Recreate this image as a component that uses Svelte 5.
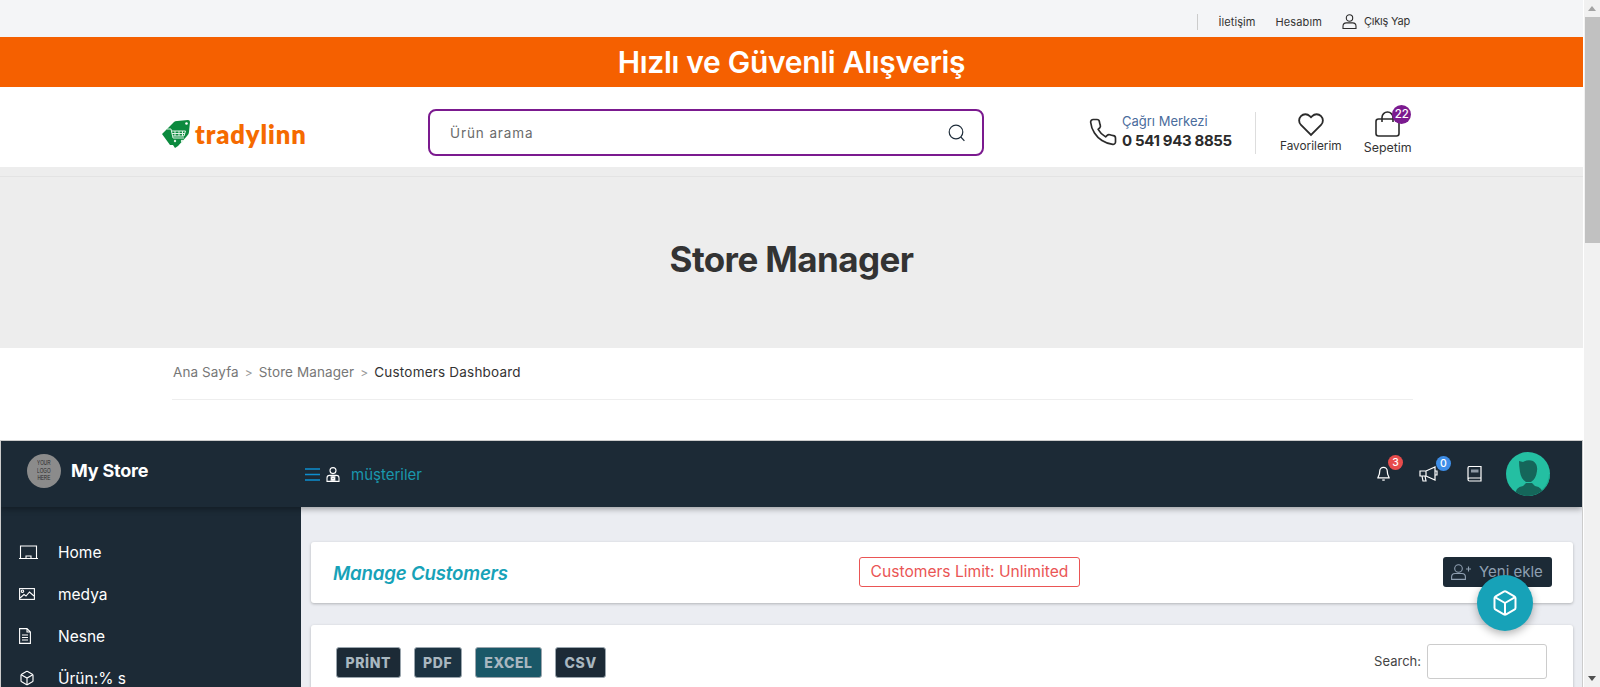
<script>
  const menu = [
    { label: 'Home', icon: 'home' },
    { label: 'medya', icon: 'media' },
    { label: 'Nesne', icon: 'doc' },
    { label: 'Ürün:% s', icon: 'cube' }
  ];
  const exportsList = [
    { label: 'PRİNT', cls: '' },
    { label: 'PDF', cls: 'pdf' },
    { label: 'EXCEL', cls: 'excel' },
    { label: 'CSV', cls: '' }
  ];
</script>

<div class="window">
  <div class="page">
    <div class="topbar">
      <span class="sep"></span>
      <a class="first">İletişim</a>
      <a>Hesabım</a>
      <a class="logout">
        <svg width="15" height="15" viewBox="0 0 15 15" fill="none" stroke="#2b2b2b" stroke-width="1.1"><circle cx="7.5" cy="4" r="3.2"/><path d="M1 14.5v-2.2c0-2 1.6-3.4 3.4-3.4h6.2c1.8 0 3.4 1.4 3.4 3.4v2.2z"/></svg>
        <span class="out">Çıkış Yap</span>
      </a>
    </div>

    <div class="promo">Hızlı ve Güvenli Alışveriş</div>

    <header class="head">
      <div class="logo">
        <svg width="30" height="30" viewBox="0 0 30 30">
          <path d="M1 15 L13 3 Q14 2 16 2 L27 1 Q29 1 29 3 L28 13 Q28 15 26 17 L17 27 L14 29 L12 26 L9 26 Z" fill="#0b8a3e"/>
          <circle cx="25.5" cy="4.5" r="1.3" fill="#fff"/>
          <path d="M6 10 h4 l2 9 h11 M10.5 12 h14 l-1.5 5 h-11 M14 12 v5 M18 12 v5 M21.5 12 v5 M11 14.5 h13" fill="none" stroke="#dff3e5" stroke-width="1"/>
          <circle cx="14" cy="22" r="1.2" fill="#dff3e5"/><circle cx="21" cy="22" r="1.2" fill="#dff3e5"/>
        </svg>
        <span>tradylinn</span>
      </div>

      <div class="search">
        <span>Ürün arama</span>
        <svg width="18" height="18" viewBox="0 0 18 18" fill="none" stroke="#1f2d3a" stroke-width="1.2"><circle cx="8" cy="8" r="6.8"/><path d="M12.8 13l3.6 3.8"/></svg>
      </div>

      <div class="call">
        <svg width="30" height="32" viewBox="0 0 24 24" fill="none" stroke="#2b2b2b" stroke-width="1.35" stroke-linejoin="round"><path d="M22 16.92v3a2 2 0 0 1-2.18 2 19.79 19.79 0 0 1-8.63-3.07 19.5 19.5 0 0 1-6-6 19.79 19.79 0 0 1-3.07-8.67A2 2 0 0 1 4.11 2h3a2 2 0 0 1 2 1.72 12.84 12.84 0 0 0 .7 2.81 2 2 0 0 1-.45 2.11L8.09 9.91a16 16 0 0 0 6 6l1.27-1.27a2 2 0 0 1 2.11-.45 12.84 12.84 0 0 0 2.81.7A2 2 0 0 1 22 16.92z"/></svg>
        <div class="call-text">
          <span class="call-label">Çağrı Merkezi</span>
          <strong>0 541 943 8855</strong>
        </div>
      </div>

      <span class="vline"></span>

      <div class="tool fav">
        <svg width="28" height="25" viewBox="0 0 24 22" fill="none" stroke="#2b2b2b" stroke-width="1.6"><path d="M20.84 3.61a5.5 5.5 0 0 0-7.78 0L12 4.67l-1.06-1.06a5.5 5.5 0 0 0-7.78 7.78L12 20.23l8.84-8.84a5.5 5.5 0 0 0 0-7.78z"/></svg>
        <span>Favorilerim</span>
      </div>

      <div class="tool cart">
        <span class="bag">
          <svg width="25" height="26" viewBox="0 0 25 26" fill="none" stroke="#2b2b2b" stroke-width="1.6"><rect x="1" y="8" width="23" height="17" rx="2.5"/><path d="M7 11V6.5a5.5 5.5 0 0 1 11 0V11"/></svg>
          <b class="count">22</b>
        </span>
        <span>Sepetim</span>
      </div>
    </header>

    <section class="hero"><h1>Store Manager</h1></section>

    <nav class="crumbs">
      <span>Ana Sayfa</span><i>&gt;</i><span>Store Manager</span><i>&gt;</i><span class="now">Customers Dashboard</span>
    </nav>

    <div class="dash">
      <div class="dash-top">
        <div class="brand">
          <span class="mark"><span>YOUR<br />LOGO<br />HERE</span></span>
          <strong>My Store</strong>
        </div>
        <div class="dash-title">
          <svg width="15" height="13" viewBox="0 0 15 13" stroke="#0d8ed0" stroke-width="1.4"><path d="M0 1h15M0 6.5h15M0 12h15"/></svg>
          <svg class="person" width="14" height="15" viewBox="0 0 14 15" fill="none" stroke="#fff" stroke-width="1.1"><circle cx="7" cy="3.6" r="3"/><path d="M1 14.4V11c0-1.6 1-2.6 2.6-2.6h6.8C12 8.4 13 9.4 13 11v3.4zM5.2 14V9M8.8 14V9M7 9l-1 2.5L7 14l1-2.5z"/></svg>
          <span>müşteriler</span>
        </div>
        <div class="dash-icons">
          <span class="ico">
            <svg width="15" height="17" viewBox="0 0 24 26" fill="none" stroke="#fff" stroke-width="2"><path d="M18 9a6 6 0 0 0-12 0c0 7-3 9-3 11h18c0-2-3-4-3-11"/><path d="M10 23.5h4"/></svg>
            <b class="pill red">3</b>
          </span>
          <span class="ico">
            <svg width="19" height="16" viewBox="0 0 19 16" fill="none" stroke="#fff" stroke-width="1.2"><path d="M1 5h6l9-4v13l-9-4H1zM16 5h2v4h-2M3 10l1 5h3l-1-5M7 5v5"/></svg>
            <b class="pill blue">0</b>
          </span>
          <span class="ico book">
            <svg width="15" height="16" viewBox="0 0 15 16" fill="none" stroke="#fff" stroke-width="1.2"><path d="M1 13V2a1.5 1.5 0 0 1 1.5-1.5H14V15H2.5A1.5 1.5 0 0 1 1 13.5a1.5 1.5 0 0 1 1.5-1.5H14"/><path d="M4 3.5h7.5v3H4z" fill="#8d99a5" stroke="none"/></svg>
          </span>
          <svg class="avatar" width="44" height="44" viewBox="0 0 44 44">
            <circle cx="22" cy="22" r="22" fill="#24bfa2"/>
            <path d="M44 22a22 22 0 0 1-22 22v-1a21 21 0 0 0 21-21z" fill="#1ca88e"/>
            <clipPath id="av"><circle cx="22" cy="22" r="22"/></clipPath>
            <g clip-path="url(#av)" fill="#15665a">
              <path d="M13 9 l4 1 q5-3 10-1 q5 3 4 10 q-1 8-6 11 h-5 q-5-3-6-10 q-1-6-1-11z"/>
              <path d="M9 44 q0-9 8-10 l3-3 h6 l3 3 q8 1 8 10z"/>
            </g>
          </svg>
        </div>
      </div>

      <div class="dash-body">
        <aside class="side">
          {#each menu as item}
            <div class="item">
              <span class="mi">
                {#if item.icon === 'home'}
                  <svg width="19" height="14" viewBox="0 0 19 14" fill="none" stroke="#fff" stroke-width="1.1"><path d="M1.5 13V1h16v12M0 13.5h19M7 13.5v-2.5h5v2.5"/></svg>
                {:else if item.icon === 'media'}
                  <svg width="16" height="12" viewBox="0 0 16 12" fill="none" stroke="#fff" stroke-width="1.1"><rect x=".6" y=".6" width="14.8" height="10.8"/><circle cx="3.5" cy="3.2" r="1.2"/><path d="M1 10l4-3.5 2 1.5 3.5-4L15 8"/></svg>
                {:else if item.icon === 'doc'}
                  <svg width="12" height="16" viewBox="0 0 12 16" fill="none" stroke="#fff" stroke-width="1.1"><path d="M.6.6h7.4l3.4 3.4v11.4H.6zM8 .6V4h3.4M3 7h6M3 9.5h6M3 12h6"/></svg>
                {:else}
                  <svg width="16" height="16" viewBox="0 0 24 24" fill="none" stroke="#fff" stroke-width="1.7"><path d="M21 16V8a2 2 0 0 0-1-1.73l-7-4a2 2 0 0 0-2 0l-7 4A2 2 0 0 0 3 8v8a2 2 0 0 0 1 1.73l7 4a2 2 0 0 0 2 0l7-4A2 2 0 0 0 21 16z"/><path d="M3.27 6.96 12 12.01l8.73-5.05M12 22.08V12"/></svg>
                {/if}
              </span>
              <span>{item.label}</span>
            </div>
          {/each}
        </aside>

        <main class="content">
          <div class="card titlecard">
            <h2>Manage Customers</h2>
            <span class="limit">Customers Limit: Unlimited</span>
            <span class="add">
              <svg width="20" height="16" viewBox="0 0 20 16" fill="none" stroke="#8fa0b2" stroke-width="1.1"><circle cx="7.5" cy="4.5" r="3.8"/><path d="M.6 15.4V13c0-2 1.6-3.5 3.5-3.5h6.8c1.9 0 3.5 1.5 3.5 3.5v2.4zM15 5h5M17.5 2.5v5"/></svg>
              Yeni ekle
            </span>
          </div>
          <div class="card tools">
            <div class="exports">
              {#each exportsList as b}
                <span class="exp {b.cls}">{b.label}</span>
              {/each}
            </div>
            <label class="find">Search:<span class="box"></span></label>
          </div>
        </main>
      </div>
    </div>
  </div>

  <div class="scrollbar">
    <span class="arrow up"></span>
    <span class="thumb"></span>
    <span class="arrow down"></span>
  </div>

  <span class="fab">
    <svg width="28" height="28" viewBox="0 0 24 24" fill="none" stroke="#fff" stroke-width="1.7" stroke-linejoin="round"><path d="M21 16V8a2 2 0 0 0-1-1.73l-7-4a2 2 0 0 0-2 0l-7 4A2 2 0 0 0 3 8v8a2 2 0 0 0 1 1.73l7 4a2 2 0 0 0 2 0l7-4A2 2 0 0 0 21 16z"/><path d="M3.27 6.96 12 12.01l8.73-5.05M12 22.08V12"/></svg>
  </span>
</div>

<style>
  :global(body) { margin: 0; font-family: Inter, "Liberation Sans", sans-serif; color: #2b2b2b; }
  .window { position: relative; display: flex; height: 687px; overflow: hidden; background: #fff; }
  .page { width: 1583px; flex: none; }

  .topbar { height: 37px; background: #f4f5f7; display: flex; align-items: center; justify-content: flex-end; padding: 6px 173px 0 0; box-sizing: border-box; font-size: 11px; color: #333; }
  .sep { width: 1px; height: 16px; background: #ccc; margin-right: 20px; }
  .topbar a { margin-right: 20px; letter-spacing: .1px; }
  .topbar a:last-child { margin-right: 0; }
  .logout { display: flex; align-items: center; gap: 7px; margin-top: -1px; }
  .out { letter-spacing: -.2px; }

  .promo { height: 50px; background: #f56000; color: #fff; display: flex; align-items: center; justify-content: center; font-size: 30px; font-weight: 600; letter-spacing: -.3px; }

  .head { height: 80px; display: flex; align-items: center; box-sizing: border-box; padding: 11px 0 0 161px; }
  .logo { width: 267px; display: flex; align-items: center; gap: 4px; font-size: 25.5px; font-weight: 800; color: #f56a00; font-family: Lato, sans-serif; letter-spacing: .9px; margin-top: 3px; }
  .search { width: 556px; height: 47px; box-sizing: border-box; border: 2px solid #7b1a8f; border-radius: 8px; display: flex; align-items: center; justify-content: space-between; padding: 0 16px 0 20px; font-size: 13.5px; letter-spacing: .9px; color: #6b6b6b; }
  .call { display: flex; align-items: center; margin-left: 104px; gap: 4px; margin-top: -2px; }
  .call-text { display: flex; flex-direction: column; gap: 2px; }
  .call-label { font-size: 13px; color: #4a6c9c; }
  .call-text strong { font-size: 15px; font-weight: 700; letter-spacing: -.35px; white-space: nowrap; color: #2b2b2b; }
  .vline { width: 1px; height: 42px; background: #ddd; margin-left: 23px; }
  .tool { display: flex; flex-direction: column; align-items: center; font-size: 11.8px; color: #333; gap: 2px; }
  .tool svg { display: block; }
  .fav { margin-left: 24px; width: 62px; }
  .cart { margin-left: 22px; width: 48px; font-size: 12.4px; gap: 3px; }
  .bag { position: relative; display: block; }
  .count { position: absolute; left: 17px; top: -6px; width: 19px; height: 19px; border-radius: 50%; background: #7b1a8f; color: #fff; font-size: 11.5px; font-weight: 500; display: flex; align-items: center; justify-content: center; }

  .hero { height: 181px; background: #ededed; box-sizing: border-box; display: flex; align-items: center; justify-content: center; box-shadow: inset 0 9px 0 #ededed, inset 0 10px 0 #e3e3e3; }
  .hero h1 { margin: 0; font-size: 35px; font-weight: 700; color: #333; letter-spacing: -.6px; position: relative; top: 1px; }

  .crumbs { margin: 0 170px 0 172px; height: 52px; box-sizing: border-box; border-bottom: 1px solid #eee; display: flex; align-items: center; font-size: 13.5px; letter-spacing: .1px; padding: 0 0 3px 1px; color: #777; white-space: nowrap; }
  .crumbs i { font-style: normal; margin: 0 6px; color: #999; font-size: 12px; }
  .now { color: #333; letter-spacing: .2px; }

  .dash { margin: 40px 0 0; height: 247px; overflow: hidden; background: #ebedf2; border: 1px solid #ccc; border-width: 1px 1px 0 1px; }
  .dash-top { height: 66px; background: #1c2a36; display: flex; align-items: center; position: relative; z-index: 2; box-shadow: 0 2px 6px rgba(0,0,0,.35); }
  .brand { width: 304px; flex: none; display: flex; align-items: center; gap: 10px; padding: 0 0 7px 26px; box-sizing: border-box; color: #fff; }
  .brand strong { font-size: 18px; font-weight: 700; letter-spacing: -.2px; }
  .mark { width: 34px; height: 34px; border-radius: 50%; background: #8b8b8b; color: #2a2a2a; font-family: "Liberation Sans", sans-serif; font-size: 7.5px; line-height: 7.6px; text-align: center; display: flex; align-items: center; justify-content: center; }
  .mark span { display: block; transform: scaleX(.62); }
  .dash-title { display: flex; align-items: center; color: #1a97ad; font-size: 15px; }
  .dash-title .person { margin: 0 11px 0 6px; }
  .dash-icons { margin-left: auto; display: flex; align-items: center; padding: 0 32px 1px 0; }
  .ico { position: relative; display: block; line-height: 0; margin-right: 28px; }
  .ico:nth-child(2) { margin-right: 29px; }
  .ico.book { margin-right: 24px; }
  .pill { position: absolute; top: -10px; left: 12px; width: 15px; height: 15px; border-radius: 50%; color: #fff; font-size: 10.5px; font-weight: 500; line-height: 15px; text-align: center; }
  .ico:nth-child(2) .pill { left: 17px; }
  .red { background: #e74c4c; }
  .blue { background: #3e8ee8; }
  .avatar { display: block; }

  .dash-body { display: flex; height: 181px; }
  .side { width: 300px; flex: none; background: #1c2a36; padding-top: 24px; color: #fff; font-size: 15.5px; }
  .item { height: 42px; display: flex; align-items: center; padding-left: 18px; }
  .mi { width: 39px; display: flex; align-items: center; }
  .content { flex: 1; padding: 35px 9px 0 10px; min-width: 0; }
  .card { background: #fff; border-radius: 3px; box-shadow: 0 1px 3px rgba(0,0,0,.25); }
  .titlecard { height: 61px; display: flex; align-items: center; padding: 0 21px 0 22px; position: relative; }
  .titlecard h2 { margin: 0; width: 526px; font-size: 18.7px; font-style: italic; font-weight: 600; color: #17a2b8; letter-spacing: -.2px; white-space: nowrap; position: relative; top: 1px; }
  .limit { width: 221px; height: 30px; box-sizing: border-box; border: 1px solid #ea5555; border-radius: 3px; color: #ea5555; font-size: 15.6px; display: flex; align-items: center; justify-content: center; white-space: nowrap; margin-bottom: 2px; }
  .add { margin-left: auto; width: 109px; height: 30px; background: #1c2a36; border-radius: 3px; color: #8fa0b2; font-size: 15px; display: flex; align-items: center; gap: 8px; padding-left: 8px; box-sizing: border-box; white-space: nowrap; margin-bottom: 2px; }
  .tools { margin-top: 22px; height: 90px; display: flex; justify-content: space-between; padding: 22px 26px 0 25px; }
  .exports { display: flex; gap: 13px; height: 31px; }
  .exp { height: 31px; padding: 0 8.5px; background: #1c2a36; border-radius: 3px; border: 1px solid #9aa5ad; box-sizing: border-box; color: #a9b7c0; font-size: 14px; font-weight: 800; letter-spacing: .6px; display: flex; align-items: center; }
  .pdf { background: #1c3342; }
  .excel { background: #1a5868; }
  .find { display: flex; align-items: flex-start; gap: 6px; font-size: 13px; color: #444; line-height: 34px; margin-top: -3px; }
  .box { width: 120px; height: 35px; box-sizing: border-box; border: 1px solid #ccc; border-radius: 3px; background: #fff; }

  .scrollbar { flex: 1; background: #f1f1f1; position: relative; border-left: 1px solid #fff; }
  .thumb { position: absolute; top: 17px; left: 1px; width: 15px; height: 226px; background: #c1c1c1; }
  .arrow { position: absolute; left: 4px; width: 0; height: 0; border-left: 4px solid transparent; border-right: 4px solid transparent; }
  .up { top: 6px; border-bottom: 5px solid #a3a3a3; }
  .down { bottom: 6px; border-top: 5px solid #505050; }

  .fab { position: absolute; left: 1477px; top: 575px; width: 56px; height: 56px; border-radius: 50%; background: #17a2b8; box-shadow: 0 3px 8px rgba(0,0,0,.3); display: flex; align-items: center; justify-content: center; }
</style>
